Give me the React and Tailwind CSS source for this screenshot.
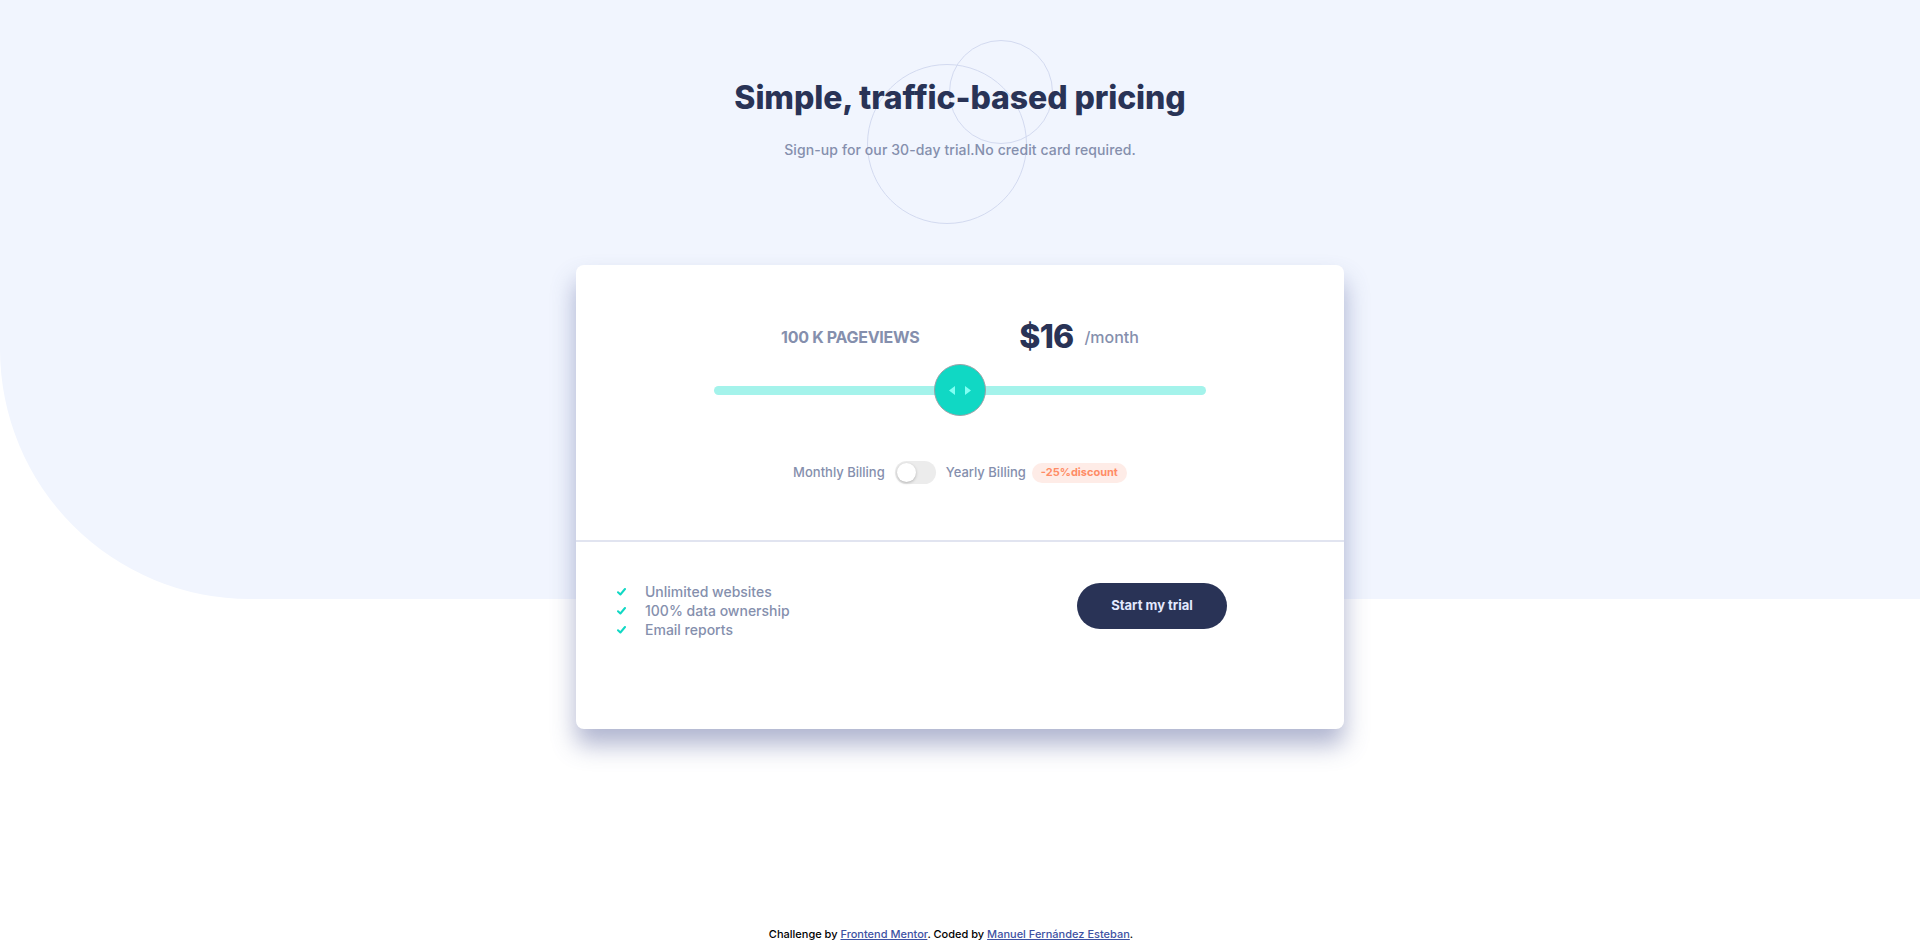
import React, { useState } from 'react';

function Check() {
  return (
    <svg width="9" height="8" viewBox="0 0 9 8" className="shrink-0">
      <path d="M1 4.2l2.4 2.3L8 1" fill="none" stroke="#10d8c4" strokeWidth="2" strokeLinecap="round" strokeLinejoin="round" />
    </svg>
  );
}

export default function App() {
  const [yearly, setYearly] = useState(false);
  const features = ['Unlimited websites', '100% data ownership', 'Email reports'];

  return (
    <div className="relative min-h-screen flex flex-col bg-white font-['Inter','Noto_Sans',sans-serif] overflow-hidden">
      {/* background shape */}
      <div className="absolute top-0 left-0 right-0 h-[599px] bg-[#f1f5fe] rounded-bl-[250px]" />

      <main className="relative flex flex-col items-center">
        {/* header */}
        <header className="relative flex flex-col items-center">
          <div className="absolute left-1/2 top-0">
            <div className="absolute left-[-11px] top-[40px] w-[104px] h-[104px] rounded-full border-[1.5px] border-[#d3daf0]" />
            <div className="absolute left-[-93px] top-[64px] w-[160px] h-[160px] rounded-full border-[1.5px] border-[#d3daf0]" />
          </div>
          <h1 className="relative mt-[76px] text-[32px] leading-[44px] font-extrabold text-[#293356] tracking-[-0.1px]">
            Simple, traffic-based pricing
          </h1>
          <p className="relative mt-[18px] text-[14px] leading-[24px] font-medium text-[#858fad] tracking-[0.1px]">
            Sign-up for our 30-day trial.No credit card required.
          </p>
        </header>

        {/* card */}
        <section className="mt-[103px] w-[768px] h-[464px] bg-white rounded-lg shadow-[0_16px_24px_rgba(80,92,150,0.45)] flex flex-col">
          <div className="h-[277px] flex flex-col items-center border-b-2 border-[#e1e4f0]">
            <div className="mt-[52px] h-[40px] flex items-center justify-center gap-[100px]">
              <span className="text-[16px] font-bold text-[#858fad] tracking-[-0.3px]">100 K PAGEVIEWS</span>
              <div className="flex items-center gap-[11px]">
                <span className="text-[32px] font-extrabold text-[#293356] tracking-[-0.8px]">$16</span>
                <span className="text-[16px] font-medium text-[#858fad]">/month</span>
              </div>
            </div>

            {/* slider */}
            <div className="relative mt-[7px] w-[492px] h-[52px] flex items-center">
              <div className="w-full h-[9px] rounded-full bg-[#a4f3eb]" />
              <div className="absolute left-[220px] top-0 w-[52px] h-[52px] rounded-full bg-[#10d8c4] border border-[#9aa3a8] flex items-center justify-center gap-[10px]">
                <svg width="6" height="9" viewBox="0 0 6 9"><path d="M6 0v9L0 4.5z" fill="#80fff3" /></svg>
                <svg width="6" height="9" viewBox="0 0 6 9"><path d="M0 0v9l6-4.5z" fill="#80fff3" /></svg>
              </div>
            </div>

            {/* billing toggle */}
            <div className="mt-[45px] flex items-center text-[13px] font-medium text-[#858fad]">
              <span>Monthly Billing</span>
              <button
                onClick={() => setYearly(!yearly)}
                className={`ml-[10px] w-[41px] h-[23px] rounded-full flex items-center px-[2px] ${yearly ? 'bg-[#7aeadf] justify-end' : 'bg-[#ececec] justify-start'}`}
              >
                <span className="w-[19px] h-[19px] rounded-full bg-white shadow-[0_1px_3px_rgba(0,0,0,0.25)]" />
              </button>
              <span className="ml-[10px]">Yearly Billing</span>
              <span className="ml-[6px] h-[20px] px-[9px] rounded-full bg-[#feece7] text-[#ff8c66] text-[11px] font-bold flex items-center">
                -25%discount
              </span>
            </div>
          </div>

          <div className="flex items-start pt-[40px] pl-[41px] pr-[117px]">
            <ul className="flex flex-col">
              {features.map((f) => (
                <li key={f} className="flex items-center gap-[19px] text-[14px] leading-[19px] font-medium text-[#858fad]">
                  <Check />
                  {f}
                </li>
              ))}
            </ul>
            <button className="ml-auto mt-[1px] w-[150px] h-[46px] rounded-full bg-[#293356] text-[#e3e9ff] text-[13px] font-bold">
              Start my trial
            </button>
          </div>
        </section>
      </main>

      <footer className="relative mt-auto mb-[1px] h-[14px] pr-[18px] text-center text-[11px] leading-[14px] font-medium text-black">
        Challenge by{' '}
        <a href="#" className="text-[#3e52a3] underline">Frontend Mentor</a>. Coded by{' '}
        <a href="#" className="text-[#3e52a3] underline">Manuel Fernández Esteban</a>.
      </footer>
    </div>
  );
}
